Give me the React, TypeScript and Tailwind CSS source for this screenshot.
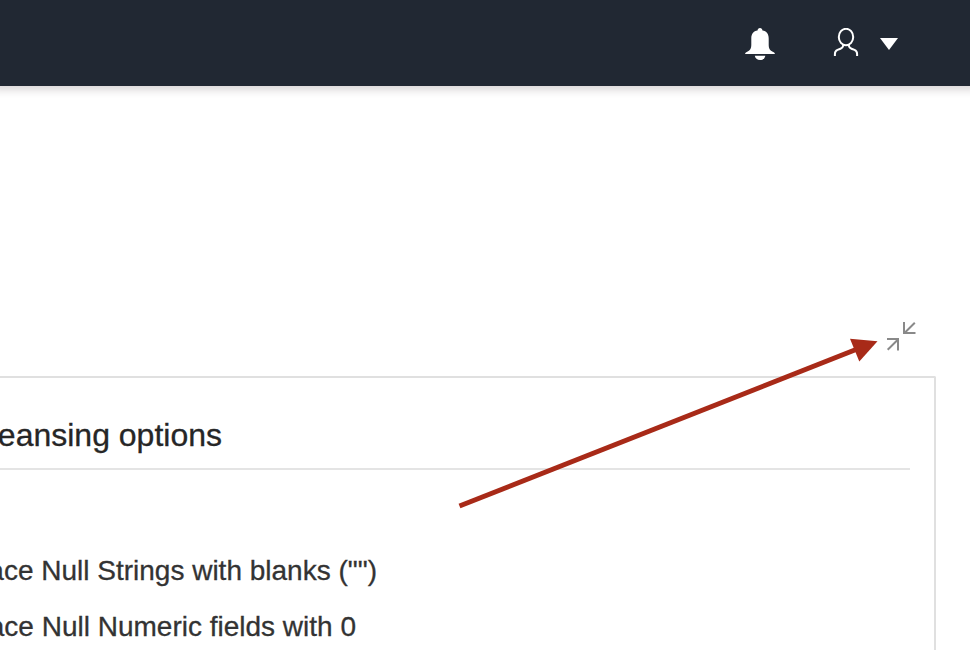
const options = [
  { text: 'ace Null Strings with blanks ("")', width: "w-[377px]" },
  { text: "ace Null Numeric fields with 0", width: "w-[356px]" },
];

function BellIcon() {
  return (
    <svg className="h-[34px] w-[30px]" viewBox="0 0 30 34" fill="#fff">
      <path d="M15 0c1.500 0 2.300 1 2.500 2.400 4 .6 6.200 3.400 6.200 8v6.200c0 4 1.200 6 4.400 7.300 1 .4 1.700 1 1.800 2H.1c.1-1 .8-1.600 1.800-2 3.200-1.300 4.400-3.300 4.400-7.300v-6.200c0-4.600 2.200-7.400 6.200-8C12.700 1 13.500 0 15 0Z" />
      <path d="M9.800 27.800h10.500c-.4 2.400-2.300 4.200-5.200 4.200s-4.900-1.800-5.300-4.200Z" />
    </svg>
  );
}

function UserIcon() {
  return (
    <svg className="h-[30px] w-[26px]" viewBox="0 0 26 30" fill="none" stroke="#fff" strokeWidth="2">
      <ellipse cx="13" cy="9" rx="7.200" ry="8.200" />
      <path d="M1.900 28v-2c0-2.100.8-3.400 2.600-4.100l3-1.200c1.900-.8 2.700-2 2.800-4M24.100 28v-2c0-2.100-.8-3.400-2.600-4.100l-3-1.200c-1.900-.8-2.700-2-2.800-4" />
    </svg>
  );
}

function CollapseIcon() {
  return (
    <svg className="h-[30px] w-[30px]" viewBox="0 0 30 30" fill="none" stroke="#898989" strokeWidth="2">
      <path d="M18 1v11H29.500M28.800 1.700 18.500 12M1 18h11V29.500M1.700 28.800 12 18.500" />
    </svg>
  );
}

export default function App() {
  return (
    <div className="relative flex h-[650px] w-[970px] flex-col overflow-hidden bg-white font-['Liberation_Sans',Arial,sans-serif]">
      <header className="flex h-[86px] shrink-0 items-start bg-[#212833] pt-7 pl-[745px] shadow-[0_-4px_8px_8px_rgba(50,35,40,0.18)]">
        <BellIcon />
        <div className="ml-[58px] flex">
          <UserIcon />
          <svg className="mt-[10px] ml-[21px] h-[12px] w-[18px]" viewBox="0 0 18 12" fill="#fff">
            <path d="M0 0h18L9 12Z" />
          </svg>
        </div>
      </header>
      <main className="flex flex-1 flex-col">
        <div className="flex h-[290px] shrink-0 items-end justify-end pr-[54px] pb-[25px]">
          <CollapseIcon />
        </div>
        <section className="mr-[34px] h-[274px] rounded-tr-[2px] border-t-2 border-r-2 border-[#e0e0e0] pr-6">
          <div className="flex h-[92px] border-b-2 border-[#e4e4e4] pt-[37px]">
            <h1 className="flex w-[222px] justify-end text-[32px] leading-[40px] whitespace-nowrap text-[#262626] [-webkit-text-stroke:0.3px]">
              eansing options
            </h1>
          </div>
          <ul className="pt-[73px]">
            {options.map(({ text, width }) => (
              <li key={text} className={`flex h-[56px] justify-end text-[28px] leading-[56px] whitespace-nowrap text-[#333] [-webkit-text-stroke:0.3px] ${width}`}>
                {text}
              </li>
            ))}
          </ul>
        </section>
      </main>
      <svg className="pointer-events-none absolute inset-0 h-full w-full" viewBox="0 0 970 650">
        <path d="M459.500 506 856 349.500" stroke="#a82a18" strokeWidth="5" />
        <path d="M850 338.800 877.500 341.300 859.300 361.500Z" fill="#a82a18" />
      </svg>
    </div>
  );
}
